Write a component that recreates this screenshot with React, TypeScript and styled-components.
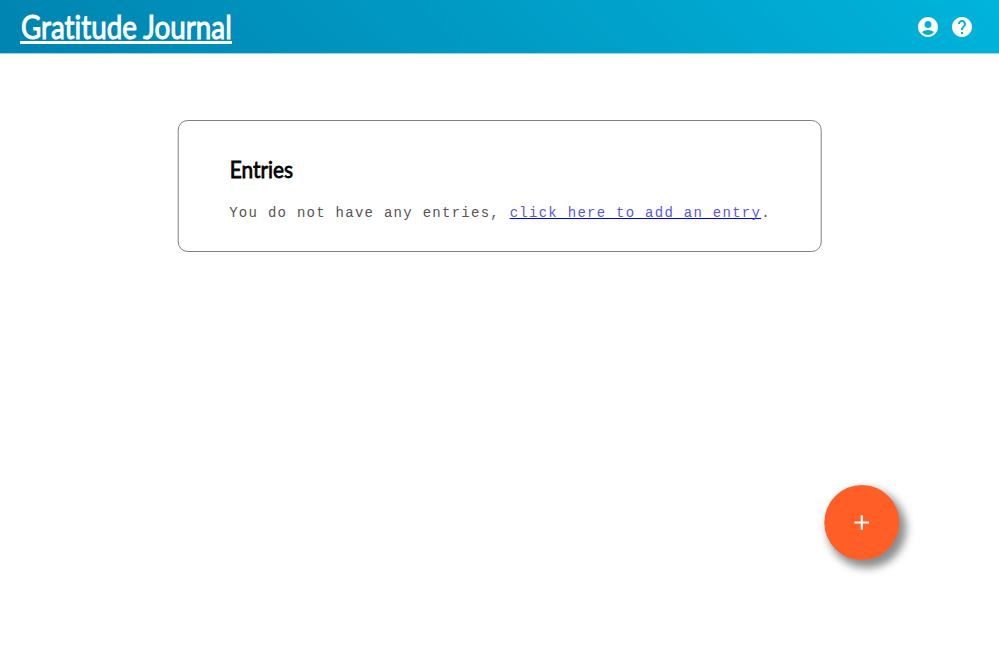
import React from 'react';
import styled, { createGlobalStyle } from 'styled-components';
import { MdAccountCircle, MdAdd, MdHelp } from 'react-icons/md';

const GlobalStyle = createGlobalStyle`
  * { box-sizing: border-box; }
  body { margin: 0; background: #fff; overflow: hidden; }
`;

const Page = styled.div`
  height: 100vh;
  display: flex;
  flex-direction: column;
  align-items: center;
`;

const Header = styled.header`
  width: 100%;
  height: 53px;
  flex: none;
  padding: 0 25px 0 20px;
  display: flex;
  justify-content: space-between;
  background: linear-gradient(45deg, #0083b0, #00b4db);
  box-shadow: 0 1px 0 rgba(0, 155, 197, 0.4);
  color: #fff;
`;

const Brand = styled.a`
  width: 212px;
  height: 44px;
  padding-left: 1px;
  border-bottom: 3px solid #fff;
  color: #fff;
  text-decoration: none;
`;

const Condensed = styled.span<{ $scale: number; $stroke: number }>`
  display: inline-block;
  white-space: nowrap;
  transform: scaleX(${(p) => p.$scale});
  transform-origin: left;
  -webkit-text-stroke: ${(p) => p.$stroke}px currentColor;
`;

const BrandText = styled(Condensed)`
  font: 400 33px/40px Lato, sans-serif;
  font-variant-ligatures: none;
  padding-top: 6px;
`;

const Nav = styled.nav`
  display: flex;
  align-items: center;
  gap: 10px;
`;

const IconLink = styled.a`
  display: flex;
  font-size: 24px;
  color: #fff;
`;

const Card = styled.main`
  width: 644px;
  height: 132px;
  margin-top: 67px;
  padding: 32px 51px 0;
  border: 1px solid #808080;
  border-radius: 10px;
  transform: translateX(-0.3px);
`;

const Title = styled.h2`
  margin: 0;
  height: 32px;
  color: #000;
  font: 400 24px/32px Lato, sans-serif;
`;

const Message = styled.p`
  margin: 17px 0 0;
  font: 400 14px/22px 'Liberation Mono', monospace;
  letter-spacing: 1.27px;
  white-space: nowrap;
  color: #555;
`;

const EntryLink = styled.a`
  color: #5656ee;
  text-decoration: underline 1px #00f;
  text-underline-offset: 1px;
  text-decoration-skip-ink: none;
`;

const AddButton = styled.button`
  position: fixed;
  right: 99px;
  bottom: 99px;
  width: 75px;
  height: 75px;
  padding: 0;
  border: 0;
  border-radius: 50%;
  display: flex;
  align-items: center;
  justify-content: center;
  font-size: 25px;
  color: #fff;
  background: #ff5f27;
  box-shadow: 5px 6px 8px 2px #8c8c8c;
  transform: translateX(-0.7px);
`;

export default function App() {
  return (
    <Page>
      <GlobalStyle />
      <Header>
        <Brand href="#"><BrandText $scale={0.842} $stroke={1}>Gratitude Journal</BrandText></Brand>
        <Nav>
          <IconLink href="#" aria-label="Account"><MdAccountCircle /></IconLink>
          <IconLink href="#" aria-label="Help"><MdHelp /></IconLink>
        </Nav>
      </Header>
      <Card>
        <Title><Condensed $scale={0.87} $stroke={0.8}>Entries</Condensed></Title>
        <Message>
          You do not have any entries, <EntryLink href="#">click here to add an entry</EntryLink>.
        </Message>
      </Card>
      <AddButton aria-label="Add entry"><MdAdd /></AddButton>
    </Page>
  );
}
